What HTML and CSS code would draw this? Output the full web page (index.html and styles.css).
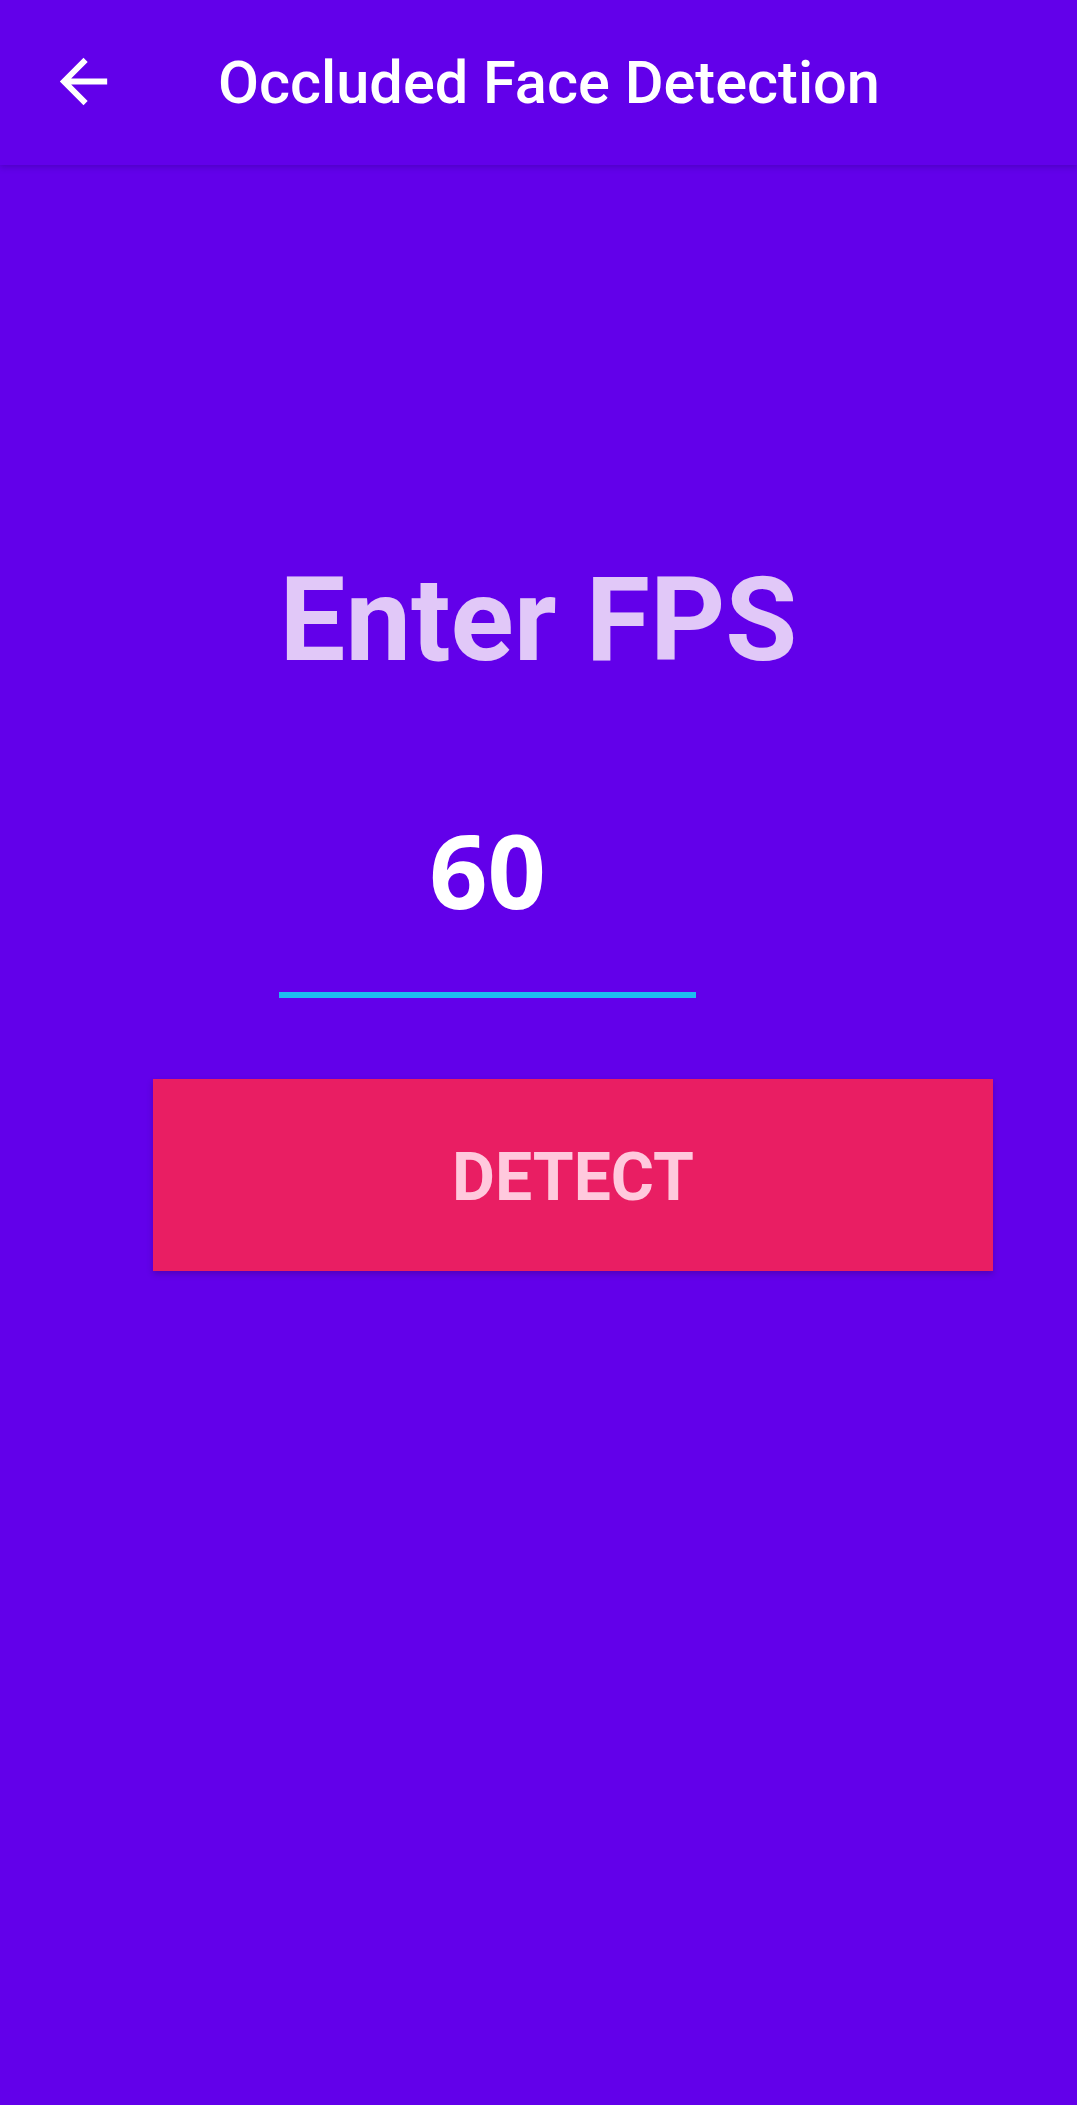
FILE: index.html
```html
<!DOCTYPE html>
<html>
<head>
<meta charset="utf-8">
<link rel="stylesheet" href="styles.css">
</head>
<body>
<div class="app">
  <header class="toolbar">
    <div class="nav-icon">
      <svg width="71" height="71" viewBox="0 0 24 24"><path d="M20 11H7.83l5.59-5.59L12 4l-8 8 8 8 1.41-1.41L7.83 13H20v-2z" fill="#ffffff"/></svg>
    </div>
    <div class="title">Occluded Face Detection</div>
  </header>
  <main class="content">
    <div class="heading">Enter FPS</div>
    <div class="field">
      <div class="field-value">60</div>
      <div class="field-line"></div>
    </div>
    <div class="button"><span class="button-label">DETECT</span></div>
  </main>
</div>
</body>
</html>
```

FILE: styles.css
```css
html, body {
  margin: 0;
  padding: 0;
  background: #6200EA;
}
.app {
  width: 1077px;
  min-height: 2105px;
  background: #6200EA;
  font-family: Roboto, "Noto Sans", sans-serif;
}
.toolbar {
  height: 165px;
  display: flex;
  align-items: center;
  background: #6200EA;
  box-shadow: 0 2px 6px rgba(40, 0, 120, 0.35);
  position: relative;
}
.nav-icon {
  width: 71px;
  height: 71px;
  margin-left: 48px;
  margin-top: -2px;
  display: flex;
}
.title {
  margin-left: 99px;
  color: #ffffff;
  font-size: 59.5px;
  font-weight: 500;
}
.content {
  display: flex;
  flex-direction: column;
  padding-top: 380px;
}
.heading {
  text-align: center;
  font-size: 117px;
  line-height: 150px;
  font-weight: 700;
  color: #E1C8F8;
  height: 150px;
}
.field {
  margin-top: 105px;
  margin-left: 279px;
  width: 417px;
  display: flex;
  flex-direction: column;
}
.field-value {
  text-align: center;
  font-family: "Open Sans", "Noto Sans", sans-serif;
  font-size: 102px;
  line-height: 140px;
  height: 140px;
  font-weight: 700;
  color: #ffffff;
}
.field-line {
  margin-top: 52px;
  height: 6px;
  background: #1DBDF0;
}
.button {
  margin-top: 81px;
  margin-left: 153px;
  width: 840px;
  height: 192px;
  background: #E91E63;
  color: #FFC9DD;
  font-size: 66px;
  font-weight: 700;
  display: flex;
  align-items: center;
  justify-content: center;
  box-shadow: 0 3px 6px rgba(40, 0, 80, 0.3);
}
.button-label {
  padding-top: 4px;
}
```
